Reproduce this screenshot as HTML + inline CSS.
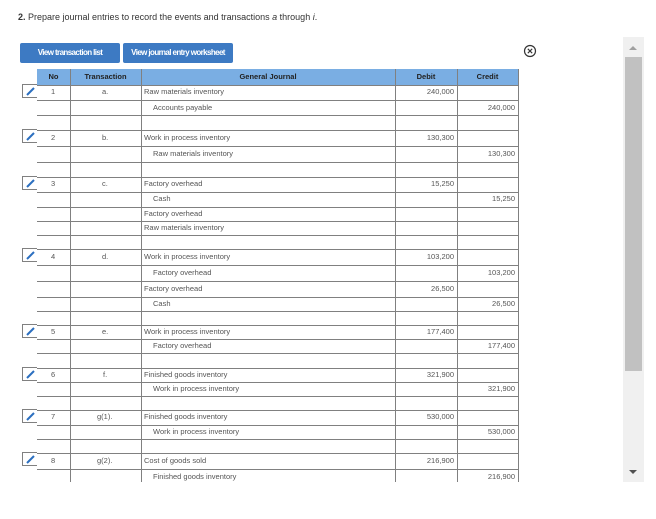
<!DOCTYPE html>
<html><head><meta charset="utf-8"><style>
body{margin:0;width:656px;height:519px;background:#fff;position:relative;overflow:hidden;font-family:"Liberation Sans",sans-serif;}
.a{position:absolute}
.h{position:absolute;left:37px;width:482px;height:1px;background:#808080}
.v{position:absolute;top:69px;height:413px;width:1px;background:#808080}
.t{position:absolute;font-size:7.5px;color:#555;line-height:10px;white-space:nowrap}
.btn{position:absolute;top:43px;height:20px;background:#3d7ac3;border-radius:2px;color:#fff;font-weight:bold;font-size:8px;letter-spacing:-0.6px;line-height:20px;text-align:center}
.hd{position:absolute;top:69px;font-size:7.5px;font-weight:bold;color:#222;line-height:16px;text-align:center}
.ed{position:absolute;left:22px;width:14px;height:12px;border:1px solid #808080;border-right:none;background:#fff}
.ed svg{position:absolute;left:3px;top:2px}
</style></head><body>
<div class="a" style="left:18px;top:12px;font-size:9px;color:#333"><b>2.</b> Prepare journal entries to record the events and transactions <i>a</i> through <i>i</i>.</div>
<div class="btn" style="left:20px;width:100px">View transaction list</div>
<div class="btn" style="left:123px;width:110px">View journal entry worksheet</div>
<svg class="a" style="left:523px;top:44px" width="14" height="14"><circle cx="7" cy="7" r="5.5" fill="none" stroke="#333" stroke-width="1.2"/><path d="M4.8 4.8L9.2 9.2M9.2 4.8L4.8 9.2" stroke="#333" stroke-width="1.1"/></svg>
<div class="a" style="left:623px;top:37px;width:21px;height:445px;background:#f0f0f0"></div>
<div class="a" style="left:625px;top:57px;width:17px;height:314px;background:#c1c1c1"></div>
<div class="a" style="left:629px;top:46px;width:0;height:0;border-left:4px solid transparent;border-right:4px solid transparent;border-bottom:4px solid #a0a0a0"></div>
<div class="a" style="left:629px;top:470px;width:0;height:0;border-left:4px solid transparent;border-right:4px solid transparent;border-top:4px solid #505050"></div>

<div class="a" style="left:37px;top:69px;width:481px;height:16px;background:#7aaee3"></div>
<div class="hd" style="left:37px;width:33px">No</div>
<div class="hd" style="left:70px;width:71px">Transaction</div>
<div class="hd" style="left:141px;width:254px">General Journal</div>
<div class="hd" style="left:395px;width:62px">Debit</div>
<div class="hd" style="left:457px;width:61px">Credit</div>

<div class="h" style="top:85px"></div><div class="h" style="top:100px"></div><div class="h" style="top:115px"></div><div class="h" style="top:130px"></div><div class="h" style="top:146px"></div><div class="h" style="top:162px"></div><div class="h" style="top:177px"></div><div class="h" style="top:192px"></div><div class="h" style="top:207px"></div><div class="h" style="top:221px"></div><div class="h" style="top:235px"></div><div class="h" style="top:249px"></div><div class="h" style="top:265px"></div><div class="h" style="top:281px"></div><div class="h" style="top:297px"></div><div class="h" style="top:311px"></div><div class="h" style="top:325px"></div><div class="h" style="top:339px"></div><div class="h" style="top:353px"></div><div class="h" style="top:368px"></div><div class="h" style="top:382px"></div><div class="h" style="top:396px"></div><div class="h" style="top:410px"></div><div class="h" style="top:425px"></div><div class="h" style="top:439px"></div><div class="h" style="top:453px"></div><div class="h" style="top:469px"></div>
<div class="v" style="left:70px"></div><div class="v" style="left:141px"></div><div class="v" style="left:395px"></div><div class="v" style="left:457px"></div><div class="v" style="left:518px"></div>

<!-- edit icons -->
<div class="ed" style="top:84px"><svg width="10" height="9"><path d="M1 8L8 1" stroke="#2c6fc0" stroke-width="2"/></svg></div>
<div class="ed" style="top:129px"><svg width="10" height="9"><path d="M1 8L8 1" stroke="#2c6fc0" stroke-width="2"/></svg></div>
<div class="ed" style="top:176px"><svg width="10" height="9"><path d="M1 8L8 1" stroke="#2c6fc0" stroke-width="2"/></svg></div>
<div class="ed" style="top:248px"><svg width="10" height="9"><path d="M1 8L8 1" stroke="#2c6fc0" stroke-width="2"/></svg></div>
<div class="ed" style="top:324px"><svg width="10" height="9"><path d="M1 8L8 1" stroke="#2c6fc0" stroke-width="2"/></svg></div>
<div class="ed" style="top:367px"><svg width="10" height="9"><path d="M1 8L8 1" stroke="#2c6fc0" stroke-width="2"/></svg></div>
<div class="ed" style="top:409px"><svg width="10" height="9"><path d="M1 8L8 1" stroke="#2c6fc0" stroke-width="2"/></svg></div>
<div class="ed" style="top:452px"><svg width="10" height="9"><path d="M1 8L8 1" stroke="#2c6fc0" stroke-width="2"/></svg></div>

<!-- entry 1 -->
<div class="t" style="left:51px;top:87px">1</div><div class="t" style="left:102px;top:87px">a.</div>
<div class="t" style="left:144px;top:87px">Raw materials inventory</div><div class="t" style="left:395px;width:59px;text-align:right;top:87px">240,000</div>
<div class="t" style="left:153px;top:103px">Accounts payable</div><div class="t" style="left:457px;width:58px;text-align:right;top:103px">240,000</div>
<!-- entry 2 -->
<div class="t" style="left:51px;top:133px">2</div><div class="t" style="left:102px;top:133px">b.</div>
<div class="t" style="left:144px;top:133px">Work in process inventory</div><div class="t" style="left:395px;width:59px;text-align:right;top:133px">130,300</div>
<div class="t" style="left:153px;top:149px">Raw materials inventory</div><div class="t" style="left:457px;width:58px;text-align:right;top:149px">130,300</div>
<!-- entry 3 -->
<div class="t" style="left:51px;top:179px">3</div><div class="t" style="left:102px;top:179px">c.</div>
<div class="t" style="left:144px;top:179px">Factory overhead</div><div class="t" style="left:395px;width:59px;text-align:right;top:179px">15,250</div>
<div class="t" style="left:153px;top:194px">Cash</div><div class="t" style="left:457px;width:58px;text-align:right;top:194px">15,250</div>
<div class="t" style="left:144px;top:209px">Factory overhead</div>
<div class="t" style="left:144px;top:223px">Raw materials inventory</div>
<!-- entry 4 -->
<div class="t" style="left:51px;top:252px">4</div><div class="t" style="left:102px;top:252px">d.</div>
<div class="t" style="left:144px;top:252px">Work in process inventory</div><div class="t" style="left:395px;width:59px;text-align:right;top:252px">103,200</div>
<div class="t" style="left:153px;top:268px">Factory overhead</div><div class="t" style="left:457px;width:58px;text-align:right;top:268px">103,200</div>
<div class="t" style="left:144px;top:284px">Factory overhead</div><div class="t" style="left:395px;width:59px;text-align:right;top:284px">26,500</div>
<div class="t" style="left:153px;top:299px">Cash</div><div class="t" style="left:457px;width:58px;text-align:right;top:299px">26,500</div>
<!-- entry 5 -->
<div class="t" style="left:51px;top:327px">5</div><div class="t" style="left:102px;top:327px">e.</div>
<div class="t" style="left:144px;top:327px">Work in process inventory</div><div class="t" style="left:395px;width:59px;text-align:right;top:327px">177,400</div>
<div class="t" style="left:153px;top:341px">Factory overhead</div><div class="t" style="left:457px;width:58px;text-align:right;top:341px">177,400</div>
<!-- entry 6 -->
<div class="t" style="left:51px;top:370px">6</div><div class="t" style="left:103px;top:370px">f.</div>
<div class="t" style="left:144px;top:370px">Finished goods inventory</div><div class="t" style="left:395px;width:59px;text-align:right;top:370px">321,900</div>
<div class="t" style="left:153px;top:384px">Work in process inventory</div><div class="t" style="left:457px;width:58px;text-align:right;top:384px">321,900</div>
<!-- entry 7 -->
<div class="t" style="left:51px;top:412px">7</div><div class="t" style="left:97px;top:412px">g(1).</div>
<div class="t" style="left:144px;top:412px">Finished goods inventory</div><div class="t" style="left:395px;width:59px;text-align:right;top:412px">530,000</div>
<div class="t" style="left:153px;top:427px">Work in process inventory</div><div class="t" style="left:457px;width:58px;text-align:right;top:427px">530,000</div>
<!-- entry 8 -->
<div class="t" style="left:51px;top:456px">8</div><div class="t" style="left:97px;top:456px">g(2).</div>
<div class="t" style="left:144px;top:456px">Cost of goods sold</div><div class="t" style="left:395px;width:59px;text-align:right;top:456px">216,900</div>
<div class="t" style="left:153px;top:472px">Finished goods inventory</div><div class="t" style="left:457px;width:58px;text-align:right;top:472px">216,900</div>
</body></html>
